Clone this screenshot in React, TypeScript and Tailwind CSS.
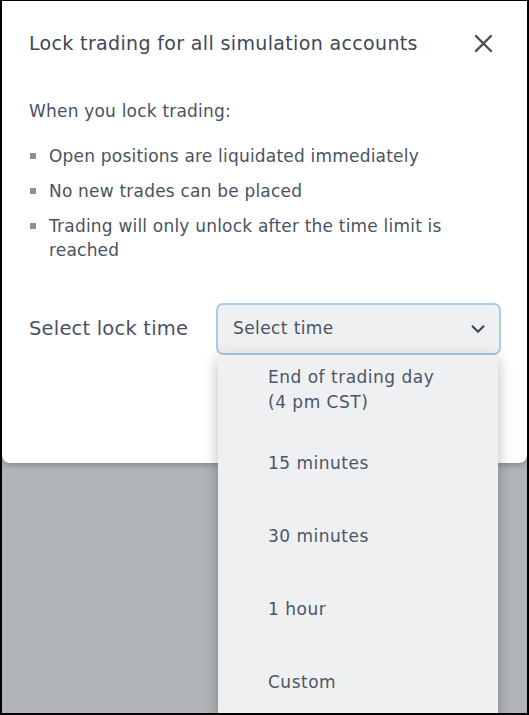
import { ChevronDown } from "lucide-react";

const BULLETS = [
  ["Open positions are liquidated immediately"],
  ["No new trades can be placed"],
  ["Trading will only unlock after the time limit is", "reached"],
];

const OPTIONS = [
  ["End of trading day", "(4 pm CST)"],
  ["15 minutes"],
  ["30 minutes"],
  ["1 hour"],
  ["Custom"],
];

export default function App() {
  return (
    <div
      className="w-[529px] h-[715px] bg-black pt-px pl-[2px] pr-[2px] pb-[2px] overflow-hidden"
      style={{ fontFamily: '"DejaVu Sans", "Noto Sans", sans-serif' }}
    >
      <div className="relative h-full bg-[#b1b4b8] overflow-hidden">
        <div className="bg-white rounded-b-[8px] shadow-[0_2px_6px_rgba(0,0,0,0.25)] h-[462px] pl-[27px] pr-[26px]">
          {/* header */}
          <div className="flex items-center justify-between pt-[30px]">
            <h2 className="text-[19px] leading-[24px] text-[#3e4758] tracking-[0.35px] whitespace-nowrap">
              Lock trading for all simulation accounts
            </h2>
            <svg width="17" height="17" viewBox="0 0 17 17" className="mr-[9px] shrink-0" fill="none">
              <path d="M1 1 L16 16 M16 1 L1 16" stroke="#4a4f58" strokeWidth="2.3" strokeLinecap="square" />
            </svg>
          </div>

          <p className="mt-[45px] text-[17px] leading-[22px] tracking-[0.2px] text-[#4a5262]">When you lock trading:</p>

          <ul className="mt-[22px] flex flex-col gap-[11px]">
            {BULLETS.map((lines, i) => (
              <li key={i} className="flex items-start text-[17px] leading-[24px] tracking-[0.2px] text-[#4a5262]">
                <span className="mt-[9px] ml-px mr-[13px] w-[6px] h-[6px] bg-[#8c8f94] shrink-0" />
                <span>
                  {lines.map((l, j) => (
                    <span key={j} className="block whitespace-nowrap">
                      {l}
                    </span>
                  ))}
                </span>
              </li>
            ))}
          </ul>

          {/* select row */}
          <div className="mt-[41px] flex items-center">
            <span className="w-[187px] shrink-0 text-[19.5px] leading-[24px] tracking-[0.2px] text-[#4a5262] whitespace-nowrap">
              Select lock time
            </span>
            <div className="relative shrink-0">
              <div className="w-[285px] h-[52px] rounded-[7px] border-2 border-[#a8cce9] bg-[#eff0f2] flex items-center justify-between pl-[15px] pr-[10px]">
                <span className="text-[17px] tracking-[0.4px] text-[#4a5262]">Select time</span>
                <ChevronDown className="w-[22px] h-[22px] text-[#3b4252]" strokeWidth={2.2} />
              </div>
              <div className="absolute left-[2px] top-[52px] w-[280px] bg-[#eff0f2] shadow-[0_4px_14px_rgba(0,0,0,0.28)] z-10">
                {OPTIONS.map((lines, i) => (
                  <div
                    key={i}
                    className="h-[73px] flex flex-col justify-center pl-[50px] pb-[3px] text-[17px] leading-[25px] tracking-[0.5px] text-[#4d5568]"
                  >
                    {lines.map((l, j) => (
                      <span key={j}>{l}</span>
                    ))}
                  </div>
                ))}
              </div>
            </div>
          </div>
        </div>
      </div>
    </div>
  );
}
